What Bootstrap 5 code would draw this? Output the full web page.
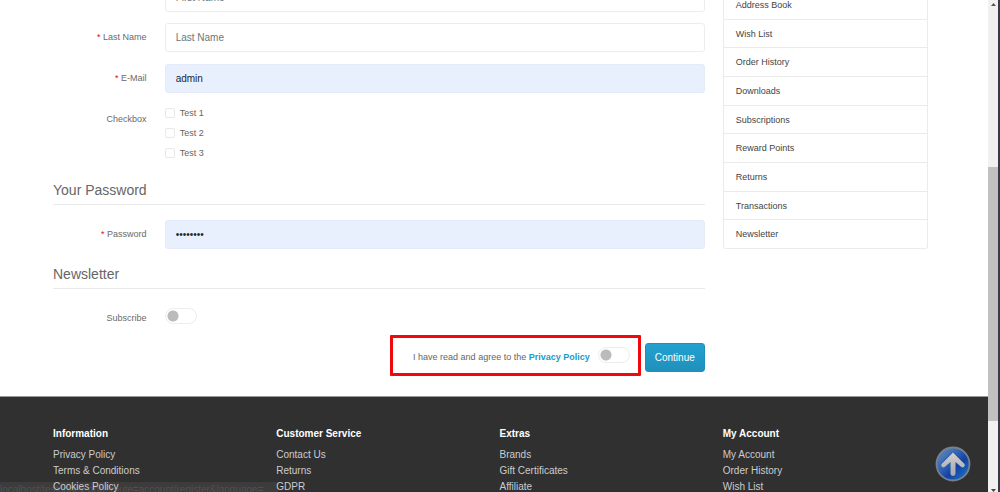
<!DOCTYPE html>
<html lang="en">
<head>
<meta charset="utf-8">
<meta name="viewport" content="width=device-width, initial-scale=1">
<title>Register Account</title>
<link href="https://cdn.jsdelivr.net/npm/bootstrap@5.3.0/dist/css/bootstrap.min.css" rel="stylesheet">
<style>
body { font-family: "Liberation Sans", Arial, sans-serif; font-size: 10px; line-height: 16px; color: #666; background: #fff; }
.viewport { height: 100vh; overflow: hidden; }
.page { min-width: 0; overflow: hidden; position: relative; }
.wrap { padding: 0 51px 0 44px; }
.wrap .row { --bs-gutter-x: 18px; }
.wrap > .row { margin: 0; }
.scrolled { margin-top: -17px; }
.field { margin-bottom: 12px; }
.field:first-child { margin-bottom: 11px; }
fieldset .field { margin-bottom: 12px; }
.form-control { font-size: 10px; line-height: 15px; padding: 6px 10px; border-color: #ebeef0; border-radius: 3px; color: #212529; }
.form-control::placeholder { color: #6c757d; }
.form-control.filled { background: #e8f0fe; border-color: #e4ebf6; }
.col-form-label { text-align: right; font-size: 9px; line-height: 15px; padding-top: 7px; padding-bottom: 7px; color: #6a6a6a; }
.required::before { content: "* "; color: #e00; }
.options { display: flex; flex-direction: column; gap: 4px; font-size: 9px; }
.form-check { min-height: 0; padding: 0; margin: 0; display: flex; align-items: center; height: 16px; gap: 5px; }
.form-check .form-check-input { float: none; margin: 0; width: 10px; height: 10px; border-color: #e6e8ea; border-radius: 2px; }
.form-check-input.toggle { float: none; flex: none; display: block; margin: 0; width: 32px; height: 16px; border-color: #ebeef0; border-radius: 8px; padding: 0; background-image: radial-gradient(circle at 7px 7px, #bbb 5px, transparent 6px); background-size: 100% 100%; background-position: 0 0; }
.group-first { padding-top: 20px; }
legend { font-size: 14px; line-height: 18px; padding-bottom: 5px; margin: 0 0 15px; border-bottom: 1px solid #e9e9e9; color: #666; }
.actions { margin-top: 2px; }
.agree { border: 3px solid #f0090c; border-radius: 1px; padding: 9px 8px 8px 20px; gap: 8px; font-size: 9px; }
.agree label { padding-top: 2px; }
.agree a { color: #229ac8; text-decoration: none; }
.btn-go { font-size: 10px; line-height: 15px; padding: 6px 9px; border: 1px solid #1f90bb; border-radius: 3px; color: #fff; background: linear-gradient(#23a1d1, #1f90bb); }
.btn-go:hover { color: #fff; background: #1f90bb; }
.menu { min-height: 259px; margin-top: 7px; font-size: 9px; }
.list-group-item { display: flex; align-items: center; flex: 1 1 0; padding: 0 12px; border-color: #ebebeb; color: #444; background: #fff; border-radius: 0; }
.list-group-item:last-child { border-radius: 0 0 3px 3px; }
.site-footer { background: #303030; border-top: 1px solid #999; padding-top: 29px; margin-top: 20px; min-height: 120px; }
.site-footer .wrap { position: relative; z-index: 1; }
.site-footer h5 { font-size: 10px; line-height: 16px; font-weight: bold; color: #fff; margin-bottom: 5px; }
.site-footer a { color: #ccc; text-decoration: none; }
.status { position: absolute; left: 0; bottom: 0; width: 278px; height: 10px; overflow: hidden; white-space: nowrap; background: #3c3c3c; color: #505050; }
.to-top { position: absolute; right: 17px; bottom: 10px; width: 36px; height: 36px; border: 0; padding: 0; background: none; z-index: 2; }
.scrollbar { width: 10px; background: #f1f1f1; }
.scrollbar span { background: #c1c1c1; }
.edge { width: 2px; background: #3b3b45; }
.track-a { flex: 157 0 0; } .track-b { flex: 254 0 0; } .track-c { flex: 62 0 0; }
</style>
</head>
<body>
<div class="viewport d-flex">
  <div class="page flex-grow-1">
    <main class="wrap scrolled">
      <div class="row">
        <div class="col-9">
          <form>
            <div class="row field">
              <label class="col-2 col-form-label required" for="first">First Name</label>
              <div class="col-10"><input class="form-control" id="first" type="text" placeholder="First Name"></div>
            </div>
            <div class="row field">
              <label class="col-2 col-form-label required" for="last">Last Name</label>
              <div class="col-10"><input class="form-control" id="last" type="text" placeholder="Last Name"></div>
            </div>
            <div class="row field">
              <label class="col-2 col-form-label required" for="email">E-Mail</label>
              <div class="col-10"><input class="form-control filled" id="email" type="text" value="admin"></div>
            </div>
            <div class="row" role="group" aria-labelledby="cb">
              <div class="col-2 col-form-label" id="cb">Checkbox</div>
              <div class="col-10 options">
                <div class="form-check"><input class="form-check-input" type="checkbox" id="t1"><label for="t1">Test 1</label></div>
                <div class="form-check"><input class="form-check-input" type="checkbox" id="t2"><label for="t2">Test 2</label></div>
                <div class="form-check"><input class="form-check-input" type="checkbox" id="t3"><label for="t3">Test 3</label></div>
              </div>
            </div>
            <fieldset class="group-first">
              <legend>Your Password</legend>
              <div class="row field">
                <label class="col-2 col-form-label required" for="pass">Password</label>
                <div class="col-10"><input class="form-control filled" id="pass" type="password" value="admin123"></div>
              </div>
            </fieldset>
            <fieldset class="pt-1">
              <legend>Newsletter</legend>
              <div class="row">
                <label class="col-2 col-form-label" for="sub">Subscribe</label>
                <div class="col-10 pt-1"><input class="form-check-input toggle" type="checkbox" role="switch" id="sub"></div>
              </div>
            </fieldset>
            <div class="d-flex justify-content-end align-items-center gap-1 actions">
              <div class="agree d-flex align-items-start">
                <label for="ok">I have read and agree to the <a href="#"><b>Privacy Policy</b></a></label>
                <input class="form-check-input toggle" type="checkbox" role="switch" id="ok">
              </div>
              <button class="btn btn-go mt-1" type="button">Continue</button>
            </div>
          </form>
        </div>
        <aside class="col-3">
          <nav class="list-group menu" aria-label="Account">
            <a class="list-group-item" href="#">Address Book</a>
            <a class="list-group-item" href="#">Wish List</a>
            <a class="list-group-item" href="#">Order History</a>
            <a class="list-group-item" href="#">Downloads</a>
            <a class="list-group-item" href="#">Subscriptions</a>
            <a class="list-group-item" href="#">Reward Points</a>
            <a class="list-group-item" href="#">Returns</a>
            <a class="list-group-item" href="#">Transactions</a>
            <a class="list-group-item" href="#">Newsletter</a>
          </nav>
        </aside>
      </div>
    </main>
    <footer class="site-footer">
      <div class="wrap">
        <div class="row">
          <div class="col-3"><h5>Information</h5>
            <ul class="list-unstyled"><li><a href="#">Privacy Policy</a></li><li><a href="#">Terms &amp; Conditions</a></li><li><a href="#">Cookies Policy</a></li></ul></div>
          <div class="col-3"><h5>Customer Service</h5>
            <ul class="list-unstyled"><li><a href="#">Contact Us</a></li><li><a href="#">Returns</a></li><li><a href="#">GDPR</a></li></ul></div>
          <div class="col-3"><h5>Extras</h5>
            <ul class="list-unstyled"><li><a href="#">Brands</a></li><li><a href="#">Gift Certificates</a></li><li><a href="#">Affiliate</a></li></ul></div>
          <div class="col-3"><h5>My Account</h5>
            <ul class="list-unstyled"><li><a href="#">My Account</a></li><li><a href="#">Order History</a></li><li><a href="#">Wish List</a></li></ul></div>
        </div>
      </div>
    </footer>
    <div class="status">localhost/test/index.php?route=account/register&amp;language=</div>
    <button class="to-top" type="button" aria-label="Back to top">
      <svg width="36" height="36" viewBox="0 0 36 36" class="d-block">
        <defs>
          <linearGradient id="ball" x1="0" y1="0" x2="1" y2="1"><stop offset="0" stop-color="#6a90c0"/><stop offset=".45" stop-color="#2a5cb0"/><stop offset=".6" stop-color="#1440a4"/><stop offset="1" stop-color="#1c80d0"/></linearGradient>
          <linearGradient id="arrow" x1="0" y1="0" x2="0" y2="1"><stop offset="0" stop-color="#d0d0d0"/><stop offset="1" stop-color="#a4a8ae"/></linearGradient>
        </defs>
        <circle cx="18" cy="18" r="16.500" fill="url(#ball)" stroke="#76818e" stroke-width="1.800"/>
        <path d="M18 28V9.500M9 18.500l9-9 9 9" fill="none" stroke="#173b87" stroke-width="5.500" stroke-linecap="round" stroke-linejoin="round" opacity=".4"/>
        <path d="M18 6.500 29.500 18q1 1.500-.5 2.800-1.500 1.200-3 0L20.500 16v12q-.5 2-2.500 2t-2.500-2V16L10 20.800q-1.500 1.200-3 0-1.500-1.300-.5-2.800z" fill="url(#arrow)"/>
      </svg>
    </button>
  </div>
  <div class="scrollbar d-flex flex-column align-items-stretch">
    <svg width="10" height="10" viewBox="0 0 10 10"><path d="M3 6h5L5.500 3z" fill="#555"/></svg>
    <div class="track-a"></div><span class="track-b"></span><div class="track-c"></div>
    <svg width="10" height="9" viewBox="0 0 10 9"><path d="M3 6h5L5.500 9z" fill="#444"/></svg>
  </div>
  <div class="edge"></div>
</div>
<script src="https://cdn.jsdelivr.net/npm/bootstrap@5.3.0/dist/js/bootstrap.bundle.min.js"></script>
</body>
</html>
